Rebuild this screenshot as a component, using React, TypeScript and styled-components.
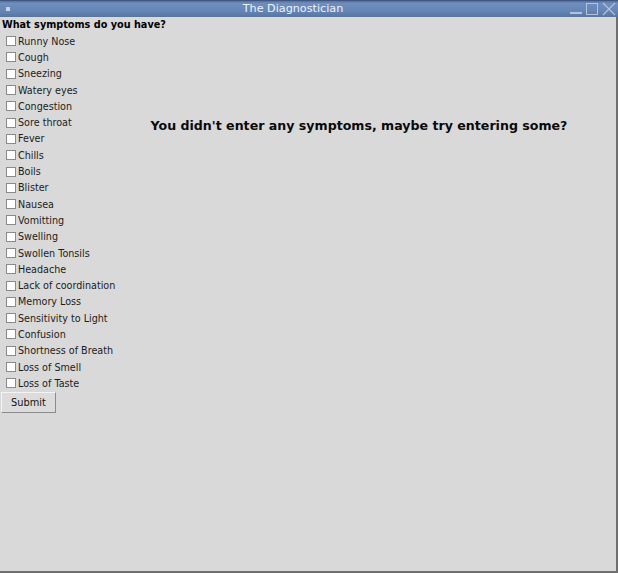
import React from "react"
import styled, { createGlobalStyle } from "styled-components"

const symptoms = [
  "Runny Nose",
  "Cough",
  "Sneezing",
  "Watery eyes",
  "Congestion",
  "Sore throat",
  "Fever",
  "Chills",
  "Boils",
  "Blister",
  "Nausea",
  "Vomitting",
  "Swelling",
  "Swollen Tonsils",
  "Headache",
  "Lack of coordination",
  "Memory Loss",
  "Sensitivity to Light",
  "Confusion",
  "Shortness of Breath",
  "Loss of Smell",
  "Loss of Taste"
]

const GlobalStyle = createGlobalStyle`
  html, body {
    margin: 0;
    padding: 0;
    width: 618px;
    height: 573px;
    overflow: hidden;
    background: #d9d9d9;
    font-family: "DejaVu Sans", sans-serif;
  }
`

const Window = styled.div`
  width: 618px;
  height: 573px;
  display: flex;
  flex-direction: column;
  box-sizing: border-box;
  border-right: 2px solid #6f6f6f;
  border-bottom: 2px solid #6f6f6f;
  background: #d9d9d9;
`

const TitleBar = styled.div`
  height: 17px;
  flex-shrink: 0;
  display: flex;
  align-items: center;
  padding: 0 2px 0 6px;
  background: linear-gradient(#55729f 0%, #6f8dbd 15%, #6686b8 60%, #56769f 100%);
  border-top: 1px solid #3f5680;
  box-sizing: border-box;
  margin-right: -2px;
`

const MenuDot = styled.div`
  width: 4px;
  height: 4px;
  background: #c6d2e6;
`

const Title = styled.div`
  flex: 1;
  text-align: center;
  color: #eef3fa;
  font-size: 11.2px;
  line-height: 16px;
  padding-left: 6px;
`

const Controls = styled.div`
  display: flex;
  gap: 3px;
  align-items: center;
`

const Body = styled.div`
  flex: 1;
  display: flex;
`

const Sidebar = styled.div`
  width: 117px;
  flex-shrink: 0;
  display: flex;
  flex-direction: column;
  padding: 2px 0 0 1px;
  white-space: nowrap;
`

const Heading = styled.div`
  font-size: 9.7px;
  font-weight: bold;
  color: #000;
  line-height: 12px;
  padding-left: 1px;
  margin-bottom: 2px;
`

const Row = styled.label`
  display: flex;
  align-items: center;
  height: 16.3px;
  padding-left: 5px;
  font-size: 9.6px;
  color: #1c1c1c;
`

const Box = styled.span`
  width: 8px;
  height: 8px;
  border: 1px solid #8a8a8a;
  background: #fff;
  margin-right: 2px;
  flex-shrink: 0;
`

const SubmitButton = styled.button`
  align-self: flex-start;
  margin-top: 0;
  width: 55px;
  height: 21px;
  font-family: "DejaVu Sans", sans-serif;
  font-size: 9.8px;
  color: #111;
  background: #dcdcdc;
  border: 1px solid;
  border-color: #f4f4f4 #8c8c8c #8c8c8c #f4f4f4;
  padding: 0;
`

const Main = styled.div`
  flex: 1;
  display: flex;
  justify-content: center;
  padding-top: 101px;
  padding-right: 16px;
`

const Message = styled.div`
  font-size: 12.6px;
  font-weight: bold;
  color: #0a0a0a;
  line-height: 16px;
  height: 16px;
  white-space: nowrap;
`

const WindowControls: React.FC = () => (
  <Controls>
    <svg width="13" height="14" viewBox="0 0 13 14">
      <rect x="0" y="10" width="12" height="2" fill="#b4c2da" />
    </svg>
    <svg width="13" height="14" viewBox="0 0 13 14">
      <rect x="0.5" y="1.5" width="11" height="11" fill="none" stroke="#b4c2da" strokeWidth="1" />
    </svg>
    <svg width="14" height="14" viewBox="0 0 14 14">
      <path d="M1 1 L13 13 M13 1 L1 13" stroke="#b4c2da" strokeWidth="1.2" />
    </svg>
  </Controls>
)

export default function App() {
  return (
    <>
      <GlobalStyle />
      <Window>
        <TitleBar>
          <MenuDot />
          <Title>The Diagnostician</Title>
          <WindowControls />
        </TitleBar>
        <Body>
          <Sidebar>
            <Heading>What symptoms do you have?</Heading>
            {symptoms.map((s) => (
              <Row key={s}>
                <Box />
                {s}
              </Row>
            ))}
            <SubmitButton>Submit</SubmitButton>
          </Sidebar>
          <Main>
            <Message>You didn't enter any symptoms, maybe try entering some?</Message>
          </Main>
        </Body>
      </Window>
    </>
  )
}
